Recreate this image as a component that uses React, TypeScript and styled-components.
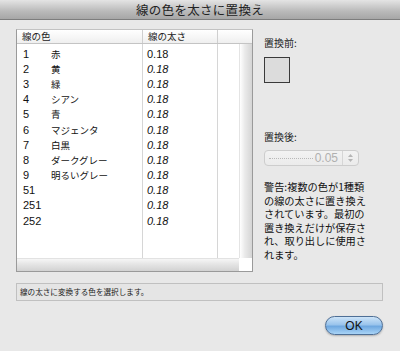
import React from "react";
import styled, { createGlobalStyle } from "styled-components";

const GlobalStyle = createGlobalStyle`
  html, body {
    margin: 0;
    padding: 0;
    background: #e8e8e8;
  }
  body {
    font-family: "Liberation Sans", "Noto Sans CJK JP", sans-serif;
    color: #111;
  }
`;

const Window = styled.div`
  width: 400px;
  height: 351px;
  display: flex;
  flex-direction: column;
  background: #e8e8e8;
  overflow: hidden;
`;

const TitleBar = styled.div`
  height: 20px;
  flex: none;
  display: flex;
  align-items: center;
  justify-content: center;
  background: linear-gradient(#e4e4e4, #b9b9b9 60%, #a6a6a6);
  border-bottom: 1px solid #7d7d7d;
  box-sizing: border-box;
  font-family: "Noto Sans CJK JP", sans-serif;
  font-size: 12.5px;
  color: #222;
  letter-spacing: 0.3px;
`;

const Content = styled.div`
  display: flex;
  flex-direction: column;
  padding: 9px 17px 0 16px;
`;

const Top = styled.div`
  display: flex;
  gap: 11px;
`;

const ListBox = styled.div`
  width: 237px;
  height: 243px;
  box-sizing: border-box;
  border: 1px solid #9a9a9a;
  border-top-color: #c2c2c2;
  display: flex;
  flex-direction: column;
  background: #fff;
`;

const Header = styled.div`
  height: 13px;
  flex: none;
  display: grid;
  grid-template-columns: 126px 75px 1fr;
  background: linear-gradient(#ffffff, #efefef);
  border-bottom: 1px solid #c4c4c4;
  font-family: "Noto Sans CJK JP", sans-serif;
  font-size: 9.5px;
  line-height: 13px;
  color: #222;
`;

const HeaderCell = styled.div`
  padding-left: 5px;
  border-right: 1px solid #cfcfcf;
  &:last-child {
    border-right: none;
  }
`;

const BodyRow = styled.div`
  flex: 1;
  display: flex;
`;

const Rows = styled.div`
  flex: 1;
  padding-top: 2px;
  background:
    linear-gradient(#d6d6d6, #d6d6d6) 125px 0 / 1px 100% no-repeat,
    linear-gradient(#d6d6d6, #d6d6d6) 200px 0 / 1px 100% no-repeat,
    #fff;
`;

const Row = styled.div`
  height: 15.2px;
  display: grid;
  grid-template-columns: 126px 75px 1fr;
  align-items: center;
  font-size: 11px;
`;

const NumCell = styled.div`
  display: flex;
  align-items: center;
  padding-left: 6px;
`;

const Num = styled.span`
  width: 28px;
  flex: none;
`;

const Name = styled.span`
  font-family: "Noto Sans CJK JP", sans-serif;
  font-size: 9.5px;
`;

const Value = styled.span<{ $italic?: boolean }>`
  padding-left: 4px;
  font-style: ${(p) => (p.$italic ? "italic" : "normal")};
`;

const VStrip = styled.div`
  width: 13px;
  flex: none;
  background: linear-gradient(90deg, #ffffff, #eaeaea 40%, #d5d5d5);
  border-left: 1px solid #e4e4e4;
  box-sizing: border-box;
`;

const BottomStrip = styled.div`
  height: 13px;
  flex: none;
  display: flex;
`;

const HStrip = styled.div`
  flex: 1;
  background: linear-gradient(#f6f6f6, #e6e6e6 40%, #d2d2d2);
  border-top: 1px solid #e2e2e2;
`;

const Corner = styled.div`
  width: 13px;
  background: #fff;
`;

const Side = styled.div`
  display: flex;
  flex-direction: column;
  font-family: "Noto Sans CJK JP", sans-serif;
  font-size: 10px;
`;

const Label = styled.div<{ $top: number }>`
  margin-top: ${(p) => p.$top}px;
  line-height: 14px;
  color: #222;
`;

const Swatch = styled.div`
  margin-top: 7px;
  width: 26px;
  height: 26px;
  box-sizing: border-box;
  border: 1px solid #3a3a3a;
  background: #dcdcdc;
`;

const Spinner = styled.div`
  margin-top: 6px;
  width: 95px;
  height: 16px;
  box-sizing: border-box;
  border: 1px solid #cdcdcd;
  border-radius: 4px;
  background: linear-gradient(#f2f2f2, #ebebeb);
  display: flex;
  align-items: center;
`;

const Dots = styled.div`
  flex: 1;
  margin: 0 2px 0 4px;
  border-top: 1px dotted #b8b8b8;
`;

const SpinValue = styled.span`
  font-family: "Liberation Sans", sans-serif;
  font-size: 12px;
  color: #b0b0b0;
  margin-right: 4px;
`;

const Stepper = styled.div`
  width: 15px;
  height: 100%;
  border-left: 1px solid #d6d6d6;
  display: flex;
  align-items: center;
  justify-content: center;
`;

const Warning = styled.div`
  margin-top: 14px;
  font-size: 10.2px;
  line-height: 13.6px;
  color: #111;
  white-space: nowrap;
`;

const Status = styled.div`
  margin-top: 11px;
  height: 18px;
  box-sizing: border-box;
  border: 1px solid #c0c0c0;
  background: #e5e5e5;
  padding-left: 3px;
  font-family: "Noto Sans CJK JP", sans-serif;
  font-size: 7.6px;
  line-height: 16px;
  color: #222;
`;

const Footer = styled.div`
  margin-top: 15px;
  display: flex;
  justify-content: flex-end;
`;

const OkButton = styled.button`
  width: 58px;
  height: 19px;
  padding: 0;
  border: 1px solid #4e6f96;
  border-radius: 10px;
  background: linear-gradient(#cde4f8 0%, #9ac4ec 45%, #6fa8e0 55%, #a9d4f7 100%);
  box-shadow: 0 1px 2px rgba(0, 0, 0, 0.25);
  font-family: "Liberation Sans", sans-serif;
  font-size: 12px;
  color: #111;
`;

const rows: [string, string, boolean][] = [
  ["1", "赤", false],
  ["2", "黄", true],
  ["3", "緑", true],
  ["4", "シアン", true],
  ["5", "青", true],
  ["6", "マジェンタ", true],
  ["7", "白黒", true],
  ["8", "ダークグレー", true],
  ["9", "明るいグレー", true],
  ["51", "", true],
  ["251", "", true],
  ["252", "", true],
];

const warningLines = [
  "警告:複数の色が1種類",
  "の線の太さに置き換え",
  "されています。最初の",
  "置き換えだけが保存さ",
  "れ、取り出しに使用さ",
  "れます。",
];

export default function App() {
  return (
    <Window>
      <GlobalStyle />
      <TitleBar>線の色を太さに置換え</TitleBar>
      <Content>
        <Top>
          <ListBox>
            <Header>
              <HeaderCell>線の色</HeaderCell>
              <HeaderCell>線の太さ</HeaderCell>
              <HeaderCell />
            </Header>
            <BodyRow>
              <Rows>
                {rows.map(([n, name, italic]) => (
                  <Row key={n}>
                    <NumCell>
                      <Num>{n}</Num>
                      <Name>{name}</Name>
                    </NumCell>
                    <Value $italic={italic}>0.18</Value>
                    <span />
                  </Row>
                ))}
              </Rows>
              <VStrip />
            </BodyRow>
            <BottomStrip>
              <HStrip />
              <Corner />
            </BottomStrip>
          </ListBox>
          <Side>
            <Label $top={7}>置換前:</Label>
            <Swatch />
            <Label $top={47}>置換後:</Label>
            <Spinner>
              <Dots />
              <SpinValue>0.05</SpinValue>
              <Stepper>
                <svg width="7" height="10" viewBox="0 0 7 10">
                  <path d="M3.5 1 L6 4 H1 Z" fill="#b5b5b5" />
                  <path d="M3.5 9 L6 6 H1 Z" fill="#b5b5b5" />
                </svg>
              </Stepper>
            </Spinner>
            <Warning>
              {warningLines.map((line) => (
                <div key={line}>{line}</div>
              ))}
            </Warning>
          </Side>
        </Top>
        <Status>線の太さに変換する色を選択します。</Status>
        <Footer>
          <OkButton>OK</OkButton>
        </Footer>
      </Content>
    </Window>
  );
}
